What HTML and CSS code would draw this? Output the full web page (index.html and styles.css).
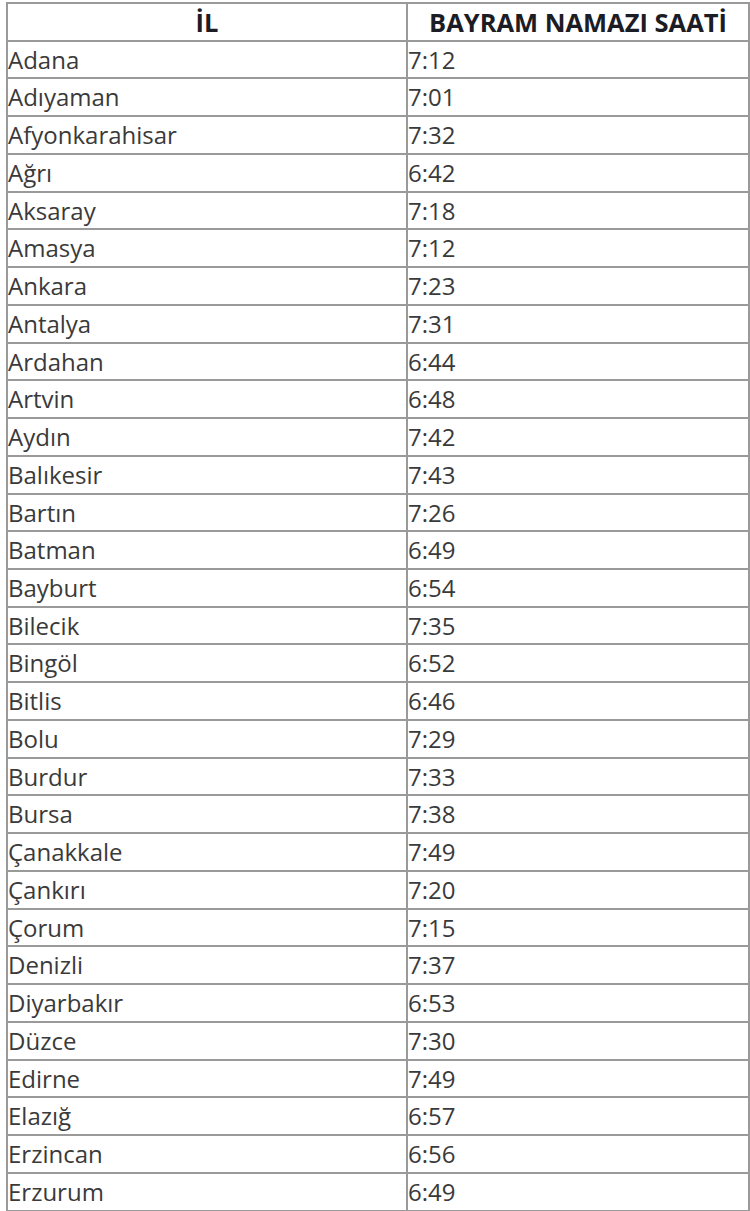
FILE: index.html
```html
<!DOCTYPE html>
<html lang="tr">
<head>
<meta charset="utf-8">
<title>Bayram Namazı Saatleri</title>
<link rel="stylesheet" href="styles.css">
</head>
<body>
<table class="prayer-table">
<thead>
<tr><th class="col-city">İL</th><th class="col-time">BAYRAM NAMAZI SAATİ</th></tr>
</thead>
<tbody>
<tr><td>Adana</td><td>7:12</td></tr>
<tr><td>Adıyaman</td><td>7:01</td></tr>
<tr><td>Afyonkarahisar</td><td>7:32</td></tr>
<tr><td>Ağrı</td><td>6:42</td></tr>
<tr><td>Aksaray</td><td>7:18</td></tr>
<tr><td>Amasya</td><td>7:12</td></tr>
<tr><td>Ankara</td><td>7:23</td></tr>
<tr><td>Antalya</td><td>7:31</td></tr>
<tr><td>Ardahan</td><td>6:44</td></tr>
<tr><td>Artvin</td><td>6:48</td></tr>
<tr><td>Aydın</td><td>7:42</td></tr>
<tr><td>Balıkesir</td><td>7:43</td></tr>
<tr><td>Bartın</td><td>7:26</td></tr>
<tr><td>Batman</td><td>6:49</td></tr>
<tr><td>Bayburt</td><td>6:54</td></tr>
<tr><td>Bilecik</td><td>7:35</td></tr>
<tr><td>Bingöl</td><td>6:52</td></tr>
<tr><td>Bitlis</td><td>6:46</td></tr>
<tr><td>Bolu</td><td>7:29</td></tr>
<tr><td>Burdur</td><td>7:33</td></tr>
<tr><td>Bursa</td><td>7:38</td></tr>
<tr><td>Çanakkale</td><td>7:49</td></tr>
<tr><td>Çankırı</td><td>7:20</td></tr>
<tr><td>Çorum</td><td>7:15</td></tr>
<tr><td>Denizli</td><td>7:37</td></tr>
<tr><td>Diyarbakır</td><td>6:53</td></tr>
<tr><td>Düzce</td><td>7:30</td></tr>
<tr><td>Edirne</td><td>7:49</td></tr>
<tr><td>Elazığ</td><td>6:57</td></tr>
<tr><td>Erzincan</td><td>6:56</td></tr>
<tr><td>Erzurum</td><td>6:49</td></tr>
</tbody>
</table>
</body>
</html>
```
FILE: styles.css
```css
html, body {
  margin: 0;
  padding: 0;
  background: #ffffff;
}

body {
  padding: 2px 0 0 6px;
  font-family: "Open Sans", "Noto Sans", "DejaVu Sans", sans-serif;
}

.prayer-table {
  border-collapse: collapse;
  width: 744px;
  table-layout: fixed;
}

.prayer-table th,
.prayer-table td {
  border: 2px solid #9a9a9a;
  padding: 1px 0 0 0;
  line-height: 34.74px;
  font-size: 24px;
  vertical-align: middle;
  white-space: nowrap;
  overflow: hidden;
}

.prayer-table th {
  font-weight: 700;
  color: #1c1c24;
  text-align: center;
  font-size: 25.5px;
}

.prayer-table td {
  color: #3a3a3a;
  text-align: left;
}

.col-city {
  width: 398px;
}
```
